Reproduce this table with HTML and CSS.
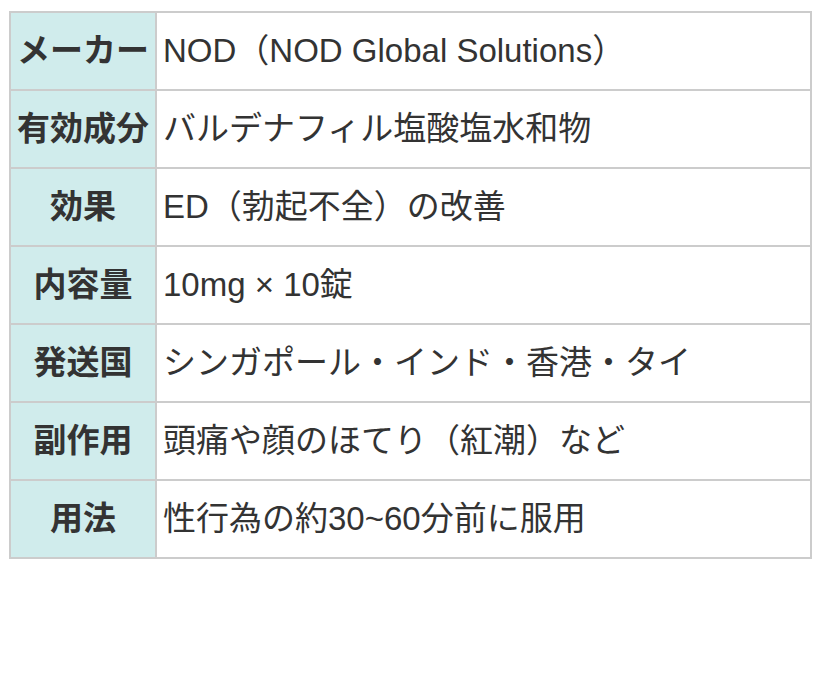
FILE: index.html
```html
<!DOCTYPE html>
<html lang="ja">
<head>
<meta charset="utf-8">
<title>製品情報</title>
<link rel="stylesheet" href="styles.css">
</head>
<body>
<div class="wrap">
<table class="spec">
<tbody>
<tr><th>メーカー</th><td>NOD（NOD Global Solutions）</td></tr>
<tr><th>有効成分</th><td>バルデナフィル塩酸塩水和物</td></tr>
<tr><th>効果</th><td>ED（勃起不全）の改善</td></tr>
<tr><th>内容量</th><td>10mg × 10錠</td></tr>
<tr><th>発送国</th><td>シンガポール・インド・香港・タイ</td></tr>
<tr><th>副作用</th><td>頭痛や顔のほてり（紅潮）など</td></tr>
<tr><th>用法</th><td>性行為の約30~60分前に服用</td></tr>
</tbody>
</table>
</div>
</body>
</html>
```
FILE: styles.css
```css
html, body {
  margin: 0;
  padding: 0;
  background: #fff;
}
.wrap {
  padding: 11px 8px 0 9px;
}
.spec {
  width: 100%;
  border-collapse: collapse;
  font-family: "Liberation Sans", "Noto Sans CJK JP", sans-serif;
  font-size: 33px;
  line-height: 48px;
  color: #333;
}
.spec th,
.spec td {
  border: 2px solid #ccc;
  padding: 14px 6px;
  height: 48px;
}
.spec th {
  background: #d0ecec;
  font-weight: bold;
  text-align: center;
  white-space: nowrap;
  width: 1%;
}
.spec td {
  text-align: left;
  font-weight: normal;
}
```
